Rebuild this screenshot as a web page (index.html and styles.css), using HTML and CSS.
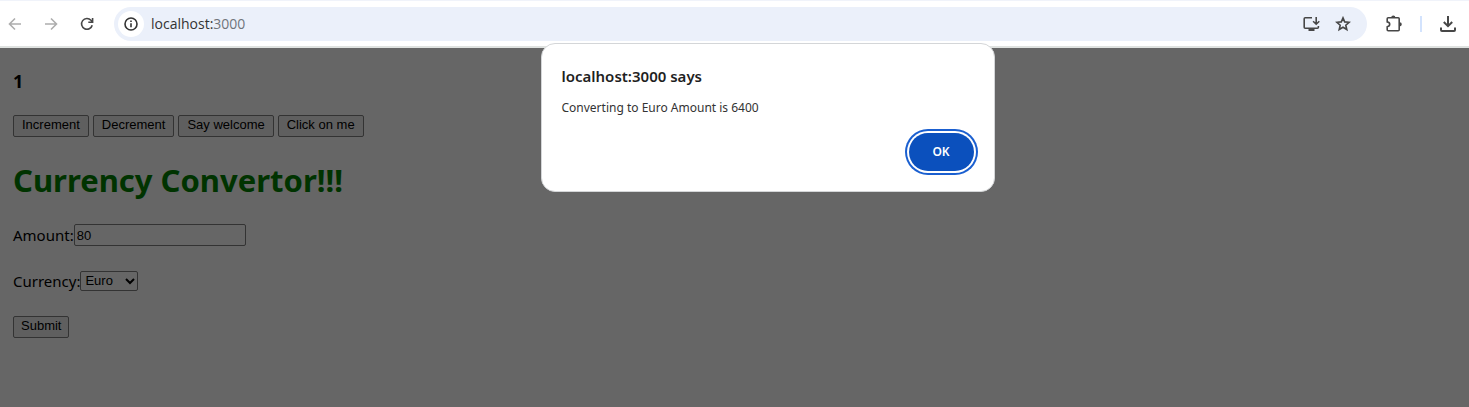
FILE: index.html
```html
<!DOCTYPE html>
<html lang="en">
<head>
<meta charset="utf-8">
<title>localhost:3000</title>
<link rel="stylesheet" href="styles.css">
</head>
<body>
<header class="toolbar">
  <nav class="nav">
    <button class="icon-btn faded" aria-label="Back"><svg width="14" height="14" viewBox="0 0 14 14"><path d="M13 7H2M7 1.500L1.500 7L7 12.500"/></svg></button>
    <button class="icon-btn faded" aria-label="Forward"><svg width="14" height="14" viewBox="0 0 14 14"><path d="M1 7H12M7 1.500L12.500 7L7 12.500"/></svg></button>
    <button class="icon-btn" aria-label="Reload"><svg width="14" height="14" viewBox="0 0 14 14"><path d="M12.200 8.200A5.400 5.400 0 1 1 11 3.300L12.300 4.700M12.600 1V5.200H8.300"/></svg></button>
  </nav>
  <div class="address">
    <button class="info" aria-label="Site information"><svg width="14" height="14" viewBox="0 0 14 14"><circle cx="7" cy="7" r="6"/><path d="M7 6.200V10.300M7 3.600V5"/></svg></button>
    <span class="url">localhost:<span class="port">3000</span></span>
    <button class="icon-btn" aria-label="Install app"><svg width="18" height="16" viewBox="0 0 18 16"><path d="M9 1.800H2.200Q1.200 1.800 1.200 2.800V11.200Q1.200 12.200 2.200 12.200H14.400Q15.400 12.200 15.400 11.200V10M13.200 1V8M10.100 5.200L13.200 8.200L16.300 5.200"/><path class="solid" d="M5.500 12H11.500V15H5.500Z"/></svg></button>
    <button class="icon-btn" aria-label="Bookmark"><svg width="16" height="16" viewBox="0 0 16 16"><path d="M8 1.900L9.700 5.900L14.100 6.300L10.800 9.200L11.800 13.500L8 11.200L4.200 13.500L5.200 9.200L1.900 6.300L6.300 5.900Z"/></svg></button>
  </div>
  <div class="tools">
    <button class="icon-btn" aria-label="Extensions"><svg width="18" height="18" viewBox="0 0 18 18"><path d="M3.200 2.800H13.200Q14.200 2.800 14.200 3.800V14.800Q14.200 15.800 13.200 15.800H3.200Q2.200 15.800 2.200 14.800V11.800Q4.700 11.300 4.700 9.300Q4.700 7.400 2.200 6.900V3.800Q2.200 2.800 3.200 2.800Z"/><path class="solid" d="M6.200 2.500A2.100 2.100 0 0 1 10.400 2.500ZM14.700 7.200A2.100 2.100 0 0 1 14.700 11.400Z"/></svg></button>
    <span class="divider"></span>
    <button class="icon-btn" aria-label="Downloads"><svg class="bold" width="18" height="18" viewBox="0 0 18 18"><path d="M9 1V11M4.800 7L9 11.200L13.200 7M2 12.500V15Q2 16 3 16H15Q16 16 16 15V12.500"/></svg></button>
  </div>
</header>
<main class="page">
  <h3 class="count">1</h3>
  <div class="actions">
    <button class="btn">Increment</button>
    <button class="btn">Decrement</button>
    <button class="btn">Say welcome</button>
    <button class="btn">Click on me</button>
  </div>
  <h1 class="title">Currency Convertor!!!</h1>
  <form class="form">
    <div class="field"><label for="amount">Amount:</label><input class="amount" id="amount" type="text" value="80"></div>
    <div class="field"><label for="currency">Currency:</label><span class="select-box"><select class="currency" id="currency"><option>Euro</option></select><svg class="chevron" width="10" height="7" viewBox="0 0 10 7"><path d="M1 1L5 5L9 1"/></svg></span></div>
    <button class="btn" type="button">Submit</button>
  </form>
</main>
<section class="dialog" role="alertdialog" aria-labelledby="says" aria-describedby="message">
  <h2 class="says" id="says">localhost:3000 says</h2>
  <p class="message" id="message">Converting to Euro Amount is 6400</p>
  <button class="ok">OK</button>
</section>
</body>
</html>
```
FILE: styles.css
```css
* { box-sizing: border-box; }
body {
  margin: 0;
  min-height: 100vh;
  display: flex;
  flex-direction: column;
  background: #666;
  color: #000;
  font: 15px/20px "Noto Sans", "Open Sans", sans-serif;
}
button { padding: 0; border: 0; background: none; }
svg { display: block; fill: none; stroke: currentColor; stroke-width: 1.600; }
.bold { stroke-width: 2; }
.solid { fill: currentColor; stroke: none; }
.toolbar {
  display: flex;
  align-items: center;
  padding: 6px 12px 5px 8px;
  background: #fff;
  border-top: 1px solid #f0f3fa;
  border-bottom: 2px solid #dfe2e0;
}
.nav { display: flex; gap: 22px; margin-right: 20px; }
.icon-btn { color: #474747; }
.faded { color: #adadad; }
.address {
  flex: 1;
  display: flex;
  align-items: center;
  gap: 14px;
  height: 34px;
  padding: 0 16px 0 4px;
  border-radius: 17px;
  background: #ebf0fa;
}
.info {
  width: 26px;
  height: 26px;
  display: grid;
  place-items: center;
  border-radius: 50%;
  background: #fff;
  color: #333;
}
.url { flex: 1; margin-left: -7px; font-family: "Open Sans", sans-serif; font-size: 14px; color: #333; }
.port { color: #70757a; }
.tools { display: flex; align-items: center; gap: 17px; margin-left: 18px; }
.divider { width: 2px; height: 16px; background: #d3e3fd; }
.page { flex: 1; padding: 21px 13px; }
.count { margin: 0; font-size: 18px; line-height: 24px; }
.actions { display: flex; gap: 4px; margin-top: 22px; }
.btn {
  height: 22px;
  padding: 0 7px 2px;
  border: 1px solid #333;
  border-radius: 2px;
  background: #5f5f5f;
  color: #000;
  font: 13px/18px "Liberation Sans", Arial, sans-serif;
}
.actions .btn { padding: 0 8px 2px; }
.title { margin: 22px 0; font-size: 31px; line-height: 43px; color: #003300; }
.form { display: flex; flex-direction: column; align-items: flex-start; gap: 24px; }
.field { display: flex; align-items: center; height: 22px; }
.amount, .currency {
  border: 1px solid #333;
  border-radius: 2px;
  background: #666;
  color: #000;
  font: 13px/18px "Liberation Sans", Arial, sans-serif;
}
.amount { width: 172px; height: 22px; padding: 0 2px; }
.select-box { display: grid; align-items: center; }
.currency { grid-area: 1 / 1; appearance: none; width: 58px; height: 20px; padding: 0 4px; }
.chevron { grid-area: 1 / 1; justify-self: end; margin-right: 3px; stroke-width: 2; pointer-events: none; }
.dialog {
  position: absolute;
  top: 43px;
  left: calc(50% - 194px);
  width: 454px;
  display: flex;
  flex-direction: column;
  padding: 21px 20px 20px 20px;
  border: 1px solid #d4d6d8;
  border-radius: 14px;
  background: #fff;
  color: #1f1f1f;
}
.says { margin: 0; font-size: 15px; line-height: 22px; font-weight: 600; }
.message { margin: 10px 0 15px; font-size: 12px; line-height: 21px; color: #333; }
.ok {
  align-self: flex-end;
  width: 65px;
  height: 38px;
  border-radius: 20px;
  background: #0b50bd;
  box-shadow: 0 0 0 2px #fff, 0 0 0 4px #1a5fd0;
  color: #fff;
  font: 600 12px/20px "Noto Sans", "Open Sans", sans-serif;
}
```
